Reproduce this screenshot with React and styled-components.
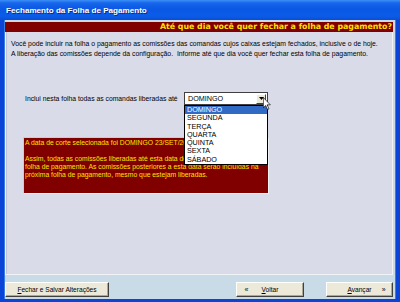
import React from 'react';
import styled, { createGlobalStyle } from 'styled-components';

const GlobalStyle = createGlobalStyle`
  html, body {
    margin: 0;
    padding: 0;
    width: 400px;
    height: 302px;
    overflow: hidden;
  }
  body {
    font-family: "Liberation Sans", Arial, sans-serif;
  }
`;

const days = ['DOMINGO', 'SEGUNDA', 'TERÇA', 'QUARTA', 'QUINTA', 'SEXTA', 'SÁBADO'];

const App = () => {
  return (
    <Window>
      <GlobalStyle />
      <TitleBar>Fechamento da Folha de Pagamento</TitleBar>
      <Client>
        <Header>Até que dia você quer fechar a folha de pagamento?</Header>
        <Panel>
          <Intro>
            Você pode incluir na folha o pagamento as comissões das comandas cujos caixas estejam fechados, inclusive o de hoje.
            <br />
            A liberação das comissões depende da configuração.&nbsp; Informe até que dia você quer fechar esta folha de pagamento.
          </Intro>
          <ChoiceRow>
            <Label>Inclui nesta folha todas as comandas liberadas até</Label>
            <Combo>
              <ComboValue>DOMINGO</ComboValue>
              <ArrowButton>
                <svg width="5" height="3" viewBox="0 0 5 3">
                  <path d="M0 0 H5 L2.5 3 Z" fill="#000" />
                </svg>
              </ArrowButton>
              <DropList>
                {days.map((d, i) => (
                  <DropItem key={d} selected={i === 0}>{d}</DropItem>
                ))}
              </DropList>
              <Cursor width="8" height="13" viewBox="0 0 12 19">
                <path d="M0.5 0.5 L0.5 16 L4 12.5 L6.8 18.5 L9 17.5 L6.3 11.5 L11 11.5 Z" fill="#fff" stroke="#000" strokeWidth="1" />
              </Cursor>
            </Combo>
          </ChoiceRow>
          <Notice>
            A data de corte selecionada foi DOMINGO 23/SET/2007.
            <br />
            <br />
            Assim, todas as comissões liberadas até esta data de corte serão pagas nesta
            <br />
            folha de pagamento. As comissões posteriores a esta data serão incluídas na
            <br />
            próxima folha de pagamento, mesmo que estejam liberadas.
          </Notice>
        </Panel>
        <Footer>
          <Button width="104px">
            <span><u>F</u>echar e Salvar Alterações</span>
          </Button>
          <Spacer />
          <Button width="68px">
            <Arrows>«</Arrows><span><u>V</u>oltar</span><Arrows />
          </Button>
          <Button width="67px" gap="22px">
            <Arrows /><span><u>A</u>vançar</span><Arrows>»</Arrows>
          </Button>
        </Footer>
      </Client>
    </Window>
  );
};

export default App;

const Window = styled.div`
  width: 400px;
  height: 302px;
  display: flex;
  flex-direction: column;
  background: #0b45d8;
`;

const TitleBar = styled.div`
  height: 20px;
  flex-shrink: 0;
  display: flex;
  align-items: center;
  padding-left: 6px;
  padding-top: 1px;
  box-sizing: border-box;
  background: linear-gradient(to bottom, #3d8ff7 0%, #1766ec 15%, #0a58e4 45%, #0a5ce8 80%, #0a4ed2 100%);
  color: #fff;
  font-size: 8.1px;
  font-weight: bold;
  text-shadow: 1px 1px 0 #0a2a8a;
`;

const Client = styled.div`
  flex: 1;
  display: flex;
  flex-direction: column;
  background: #c8dbe6;
  border-left: 4px solid #0b45d8;
  border-right: 4px solid #0b45d8;
  border-bottom: 3px solid #0b45d8;
  box-shadow: inset 1px 0 0 #3b7be6, inset -1px 0 0 #3b7be6;
  padding: 2px 3px 0 1px;
  min-height: 0;
`;

const Header = styled.div`
  height: 10px;
  flex-shrink: 0;
  background: #800000;
  color: #ffe000;
  font-family: "DejaVu Sans", Verdana, sans-serif;
  font-size: 7.85px;
  font-weight: bold;
  line-height: 10px;
  text-align: right;
  padding-right: 1px;
  white-space: nowrap;
  overflow: hidden;
`;

const Panel = styled.div`
  flex: 1;
  background: #d9dce8;
  border: 1px solid #f2f3f7;
  border-top: none;
  box-shadow: inset 1px 0 0 #c0c4d2;
  min-height: 0;
`;

const Intro = styled.div`
  padding: 7px 0 0 5px;
  font-size: 6.85px;
  line-height: 9.5px;
  color: #000;
  white-space: nowrap;
`;

const ChoiceRow = styled.div`
  display: flex;
  align-items: center;
  margin-top: 34px;
  padding-left: 19px;
`;

const Label = styled.div`
  width: 159px;
  flex-shrink: 0;
  font-size: 6.8px;
  color: #000;
  white-space: nowrap;
`;

const Combo = styled.div`
  position: relative;
  width: 84px;
  height: 13px;
  box-sizing: border-box;
  background: #fff;
  border: 1px solid #404040;
  display: flex;
  align-items: center;
`;

const ComboValue = styled.div`
  flex: 1;
  padding-left: 3px;
  font-size: 7.2px;
  color: #000;
`;

const ArrowButton = styled.div`
  width: 10px;
  height: 10px;
  margin-right: 1px;
  box-sizing: border-box;
  background: #ece9d8;
  border: 1px solid;
  border-color: #fff #404040 #404040 #fff;
  display: flex;
  align-items: center;
  justify-content: center;
`;

const DropList = styled.div`
  position: absolute;
  top: 12px;
  left: -1px;
  width: 84px;
  height: 60px;
  box-sizing: border-box;
  background: #fff;
  border: 1px solid #000;
  z-index: 2;
`;

const DropItem = styled.div`
  height: 8.3px;
  line-height: 8.3px;
  padding-left: 2px;
  font-size: 7.2px;
  background: ${(p) => (p.selected ? '#316ac5' : 'transparent')};
  color: ${(p) => (p.selected ? '#fff' : '#000')};
`;

const Cursor = styled.svg`
  position: absolute;
  left: 78px;
  top: 4px;
  z-index: 3;
`;

const Notice = styled.div`
  margin: 32px 0 0 17px;
  width: 246px;
  height: 57px;
  box-sizing: border-box;
  background: #800000;
  border: 1px solid #eef0f4;
  border-left-color: #c8ccd8;
  border-top-color: #c8ccd8;
  padding: 1px 0 0 1px;
  color: #ffe000;
  font-size: 6.8px;
  line-height: 8px;
  white-space: nowrap;
  overflow: hidden;
`;

const Footer = styled.div`
  height: 24px;
  flex-shrink: 0;
  display: flex;
  align-items: flex-start;
  padding-top: 7px;
  box-sizing: border-box;
`;

const Spacer = styled.div`
  flex: 1;
`;

const Button = styled.div`
  width: ${(p) => p.width};
  margin-left: ${(p) => p.gap || '0'};
  height: 15px;
  box-sizing: border-box;
  background: #ece9d8;
  border: 1px solid;
  border-color: #fff #404040 #404040 #fff;
  box-shadow: inset -1px -1px 0 #aca899;
  display: flex;
  align-items: center;
  justify-content: space-around;
  font-size: 6.6px;
  color: #000;
  white-space: nowrap;
`;

const Arrows = styled.span`
  width: 8px;
  text-align: center;
  font-size: 7px;
`;
